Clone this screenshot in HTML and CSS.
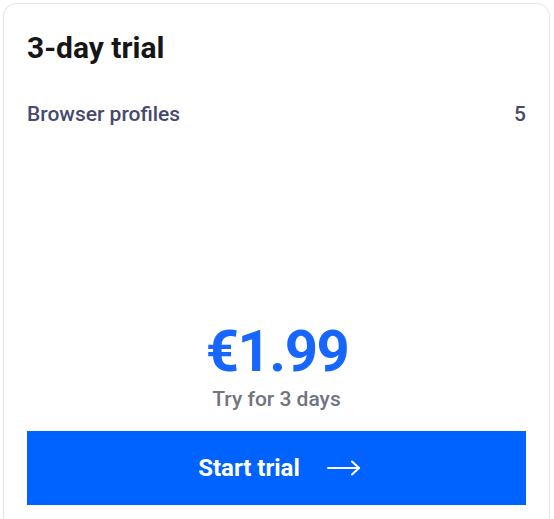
FILE: index.html
```html
<!DOCTYPE html>
<html lang="en">
<head>
<meta charset="utf-8">
<title>3-day trial</title>
<link rel="stylesheet" href="styles.css">
</head>
<body>
<div class="card">
  <h2 class="title">3-day trial</h2>
  <div class="feature">
    <span class="feature-name">Browser profiles</span>
    <span class="feature-value">5</span>
  </div>
  <div class="pricing">
    <div class="price">€1.99</div>
    <div class="price-note">Try for 3 days</div>
  </div>
  <button class="cta" type="button">
    <span>Start trial</span>
    <svg class="arrow" width="34" height="16" viewBox="0 0 34 16" fill="none" stroke="#fff" stroke-width="2" stroke-linecap="round" stroke-linejoin="round">
      <path d="M1 8H32"/>
      <path d="M25 1.5L32 8L25 14.5"/>
    </svg>
  </button>
</div>
</body>
</html>
```
FILE: styles.css
```css
* { box-sizing: border-box; }
html, body { margin: 0; padding: 0; background: #fff; overflow: hidden; }
body {
  font-family: Roboto, "Liberation Sans", Arial, sans-serif;
  padding: 3px 4px 0 3px;
}
.card {
  height: 527px;
  border: 1px solid #e4e5e9;
  border-radius: 13px;
  padding: 27px 23px 24px 23px;
  display: flex;
  flex-direction: column;
}
.title {
  margin: 0;
  font-size: 30px;
  font-weight: 700;
  line-height: 34px;
  color: #161616;
}
.feature {
  margin-top: 36px;
  display: flex;
  justify-content: space-between;
  align-items: baseline;
  font-size: 21px;
  font-weight: 500;
  color: #474a6e;
  line-height: 26px;
}
.pricing {
  margin-top: auto;
  text-align: center;
}
.price {
  font-size: 58px;
  font-weight: 700;
  color: #1766ff;
  line-height: 62px;
  letter-spacing: -1.5px;
  text-indent: 1px;
}
.price-note {
  font-size: 21px;
  font-weight: 500;
  color: #707580;
  line-height: 26px;
  margin-top: 4px;
}
.cta {
  margin-top: 19px;
  height: 74px;
  border: 0;
  background: #0062ff;
  color: #fff;
  font-family: inherit;
  font-size: 24px;
  font-weight: 700;
  display: flex;
  align-items: center;
  justify-content: center;
  gap: 27px;
  padding: 0 0 0 6px;
  cursor: pointer;
}
.arrow { display: block; }
```
